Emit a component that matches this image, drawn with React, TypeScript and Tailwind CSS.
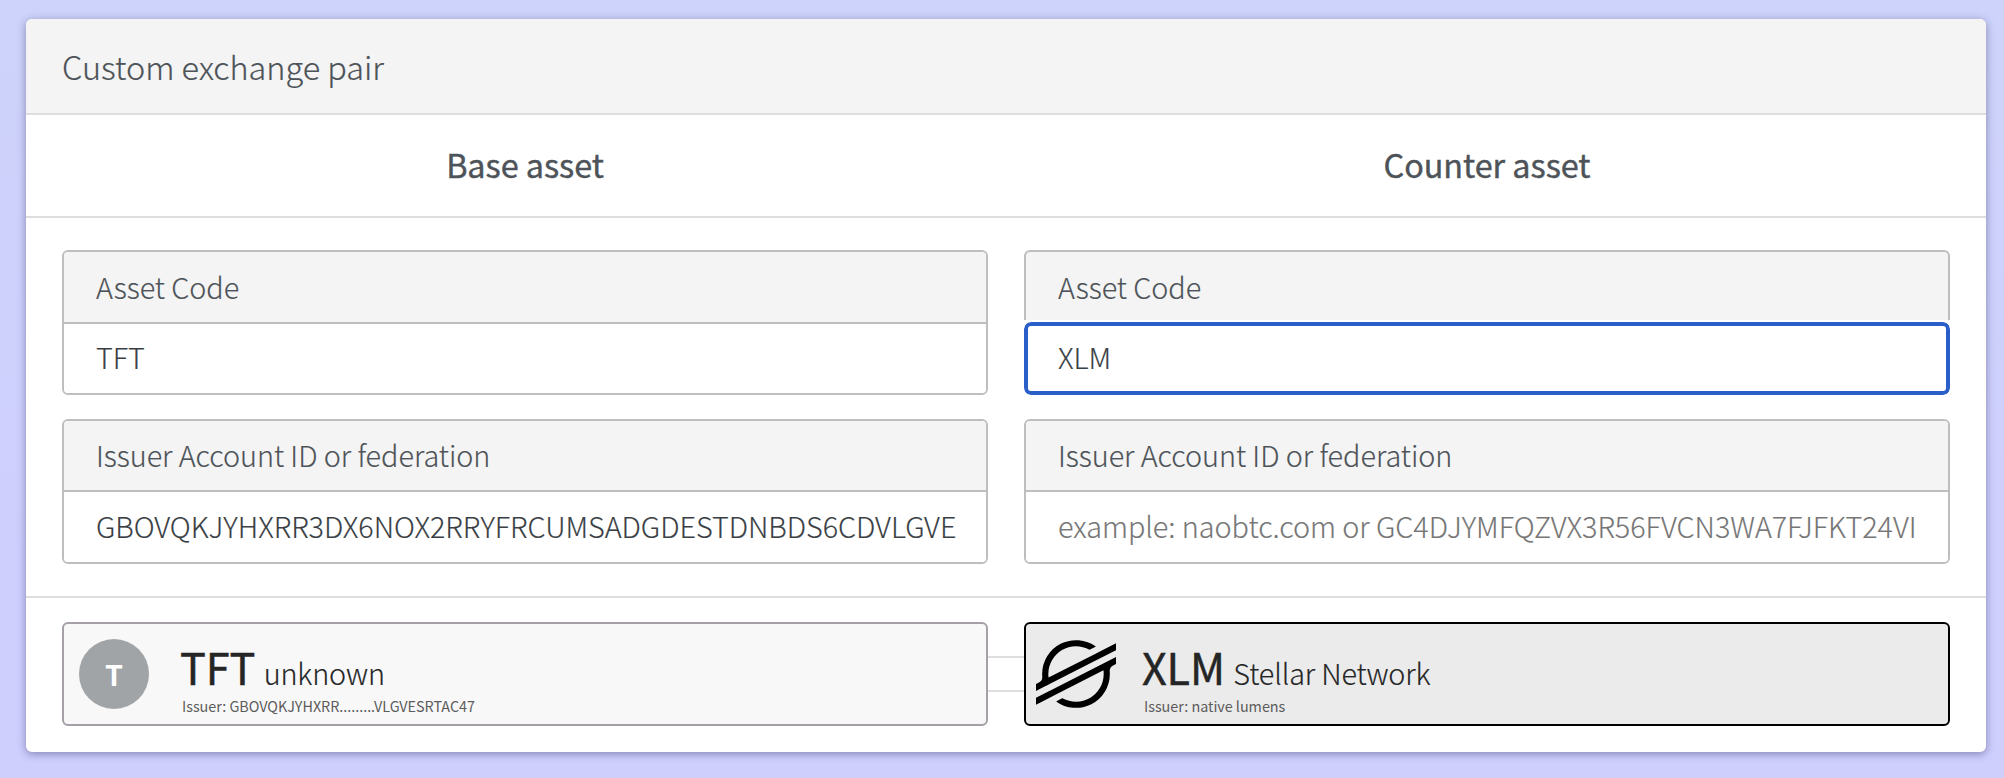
import { clsx } from 'clsx';

type FieldProps = {
  label: string;
  value: string;
  placeholder?: boolean;
  focused?: boolean;
  tall?: boolean;
};

function Field({ label, value, placeholder, focused, tall }: FieldProps) {
  return (
    <div
      className={clsx(
        'flex h-[145px] flex-col tracking-[-0.05px] [-webkit-text-stroke:0.15px_currentColor]',
        focused ? '' : 'overflow-hidden rounded-[6px] border-2 border-[#bebebe]',
      )}
    >
      <div
        className={clsx(
          'flex items-center bg-[#f4f4f4] text-[28.8px] leading-none font-light text-[#4d5358]',
          focused
            ? 'h-[70px] rounded-t-[6px] border-2 border-b-0 border-[#bebebe] px-8'
            : tall
              ? 'h-[72px] border-b-2 border-[#bebebe] px-8'
              : 'h-[71px] border-b-2 border-[#bebebe] px-8',
        )}
      >
        <span className={clsx('whitespace-nowrap', focused && 'pt-[2px]')}>{label}</span>
      </div>
      <div
        className={clsx(
          'flex flex-1 items-center bg-white text-[28.8px] leading-none font-light whitespace-nowrap',
          placeholder ? 'text-[#767676]' : 'text-[#3a3f45]',
          focused
            ? 'mt-[2px] rounded-[7px] border-4 border-[#2a5fc9] px-[30px] pb-[2px] outline-2 outline-white'
            : tall
              ? 'px-8 pb-[3px]'
              : 'px-8 pb-px',
        )}
      >
        <span>{value}</span>
      </div>
    </div>
  );
}

function StellarLogo() {
  return (
    <svg viewBox="0 0 236.36 200" className="h-[68px] w-20" fill="#000">
      <path d="M203,26.16l-28.46,14.5-137.43,70a82.49,82.49,0,0,1-.7-10.69A81.87,81.87,0,0,1,158.2,28.6l16.29-8.3,2.43-1.24A100,100,0,0,0,18.18,100q0,3.82.29,7.61a18.19,18.19,0,0,1-9.88,17.58L0,129.57V150l25.29-12.89,0,0,8.19-4.18,8.07-4.11v0L186.43,55l16.28-8.29,33.65-17.15V9.14Z" />
      <path d="M236.36,50,49.78,145,33.5,153.31,0,170.38v20.41l33.27-16.95,28.46-14.5L199.3,89.24A83.45,83.45,0,0,1,200,100,81.87,81.87,0,0,1,78.09,171.36l-1,.53-17.66,9A100,100,0,0,0,218.18,100c0-2.57-.1-5.14-.29-7.68a18.2,18.2,0,0,1,9.87-17.58l8.6-4.38Z" />
    </svg>
  );
}

function AssetText({ code, name, issuer }: { code: string; name: string; issuer: string }) {
  return (
    <div className="flex flex-col pt-[10px] whitespace-nowrap">
      <div className="flex items-baseline leading-[48px] text-[#252525]">
        <span className="text-[43.2px] tracking-[-0.15px] [-webkit-text-stroke:0.5px_#252525]">{code}</span>
        <span className="ml-[8.5px] text-[28.8px] font-light tracking-[-0.15px] [-webkit-text-stroke:0.15px_#252525]">
          {name}
        </span>
      </div>
      <span className="-mt-px ml-[2px] text-[14.4px] leading-5 tracking-[-0.03px] text-[#5c5c5c]">{issuer}</span>
    </div>
  );
}

export default function App() {
  return (
    <main
      lang="en"
      className="h-[778px] w-[2004px] overflow-hidden bg-linear-to-b from-[#cdd3fa] to-[#cfcffe] to-70% pt-[19px] pl-[26px] font-['Noto_Sans_CJK_SC','Noto_Sans',sans-serif]"
    >
      <section className="h-[733px] w-[1960px] overflow-hidden rounded-[6px] bg-white shadow-[0_2px_8px_rgba(40,40,90,0.45)]">
        <header className="flex h-24 items-center border-b-2 border-[#dedede] bg-[#f4f4f4] px-9">
          <h1 className="text-[32.4px] leading-none font-light text-[#4d5358] [-webkit-text-stroke:0.2px_#4d5358]">
            Custom exchange pair
          </h1>
        </header>
        <div className="grid h-[103px] grid-cols-2 items-center gap-9 border-b-2 border-[#dedede] px-9 pb-[3px] text-center text-[32.4px] leading-none tracking-[-0.05px] text-[#4d5358] [-webkit-text-stroke:0.4px_#4d5358]">
          <h2>Base asset</h2>
          <h2>Counter asset</h2>
        </div>
        <div className="grid h-[380px] grid-cols-2 content-start gap-x-9 gap-y-6 border-b-2 border-[#dedede] px-9 pt-8">
          <Field label="Asset Code" value="TFT" tall />
          <Field label="Asset Code" value="XLM" focused />
          <Field
            label="Issuer Account ID or federation"
            value="GBOVQKJYHXRR3DX6NOX2RRYFRCUMSADGDESTDNBDS6CDVLGVE"
          />
          <Field
            label="Issuer Account ID or federation"
            value="example: naobtc.com or GC4DJYMFQZVX3R56FVCN3WA7FJFKT24VI"
            placeholder
          />
        </div>
        <div className="flex items-center px-9 pt-6">
          <div className="flex h-[104px] w-[926px] items-center rounded-[6px] border-2 border-[#a5a0a7] bg-[#f8f8f8] pl-[15px]">
            <div className="mr-[31px] flex size-[70px] items-center justify-center rounded-full bg-[#a0a4a7] text-[28.8px] leading-none font-bold text-white">
              T
            </div>
            <AssetText code="TFT" name="unknown" issuer="Issuer: GBOVQKJYHXRR.........VLGVESRTAC47" />
          </div>
          <div className="h-9 w-9 border-y-2 border-[#dedede]" />
          <div className="flex h-[104px] w-[926px] items-center rounded-[6px] border-2 border-black bg-[#ebebeb] pl-[10px]">
            <div className="mr-[26px]">
              <StellarLogo />
            </div>
            <AssetText code="XLM" name="Stellar Network" issuer="Issuer: native lumens" />
          </div>
        </div>
      </section>
    </main>
  );
}
